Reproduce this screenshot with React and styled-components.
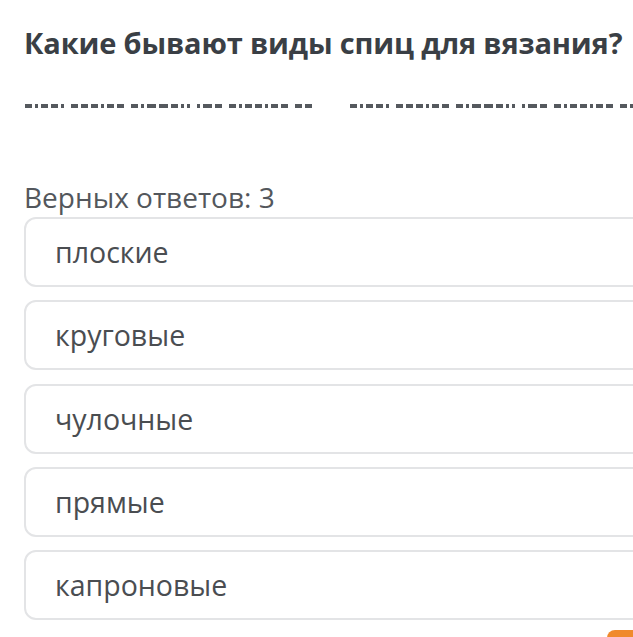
import React from "react";
import styled, { createGlobalStyle } from "styled-components";

const Global = createGlobalStyle`
  html, body {
    margin: 0;
    padding: 0;
    background: #ffffff;
    overflow: hidden;
  }
  body {
    font-family: "Open Sans", "Noto Sans", sans-serif;
  }
`;

const Page = styled.div`
  width: 660px;
  padding: 25px 0 0 24px;
  display: flex;
  flex-direction: column;
`;

const Title = styled.h1`
  margin: 0;
  font-size: 29px;
  line-height: 36px;
  font-weight: 700;
  color: #3a3f45;
  white-space: nowrap;
  letter-spacing: -0.15px;
`;

const Obscured = styled.svg`
  display: block;
  margin-top: 42px;
  width: 610px;
  height: 6px;
`;

const Counter = styled.div`
  margin-top: 70px;
  font-size: 28px;
  line-height: 36px;
  color: #53575c;
`;

const List = styled.div`
  display: flex;
  flex-direction: column;
  gap: 13.25px;
  margin-top: 2px;
`;

const Option = styled.div`
  box-sizing: border-box;
  height: 70px;
  display: flex;
  align-items: center;
  padding-left: 29px;
  border: 2px solid #e3e4e6;
  border-radius: 12px;
  font-size: 28.5px;
  color: #4a4d51;
  background: #fff;
`;

const Footer = styled.div`
  display: flex;
  justify-content: flex-end;
  margin-top: 10px;
`;

const NextButton = styled.div`
  width: 77px;
  height: 40px;
  border-radius: 8px 0 0 0;
  background: #f08a2c;
`;

/* obscured (masked) line of text, drawn as dash groups */
const words = [
  [7, 3, 7, 7, 3],
  [7, 7, 7, 3, 7, 7],
  [7, 3, 9, 9, 7, 3, 3],
  [3, 9, 7],
  [7, 3, 7, 7, 3, 7, 7],
  [7, 7],
];

function buildHalf() {
  const out = [];
  let x = 0;
  words.forEach((w) => {
    w.forEach((len) => {
      out.push([x, len]);
      x += len + 3;
    });
    x += 4;
  });
  return out;
}

const half = buildHalf();
const offsets = [1, 326];

function DashLine() {
  return (
    <Obscured viewBox="0 0 610 6" aria-hidden="true">
      {offsets.map((o) =>
        half.map(([x, w], i) => (
          <rect key={o + "-" + i} x={o + x} y={1} width={w} height={4} fill="#55595e" />
        ))
      )}
    </Obscured>
  );
}

const options = ["плоские", "круговые", "чулочные", "прямые", "капроновые"];

export default function App() {
  return (
    <>
      <Global />
      <Page>
        <Title>Какие бывают виды спиц для вязания?</Title>
        <DashLine />
        <Counter>Верных ответов: 3</Counter>
        <List>
          {options.map((o) => (
            <Option key={o}>{o}</Option>
          ))}
        </List>
        <Footer>
          <NextButton />
        </Footer>
      </Page>
    </>
  );
}
